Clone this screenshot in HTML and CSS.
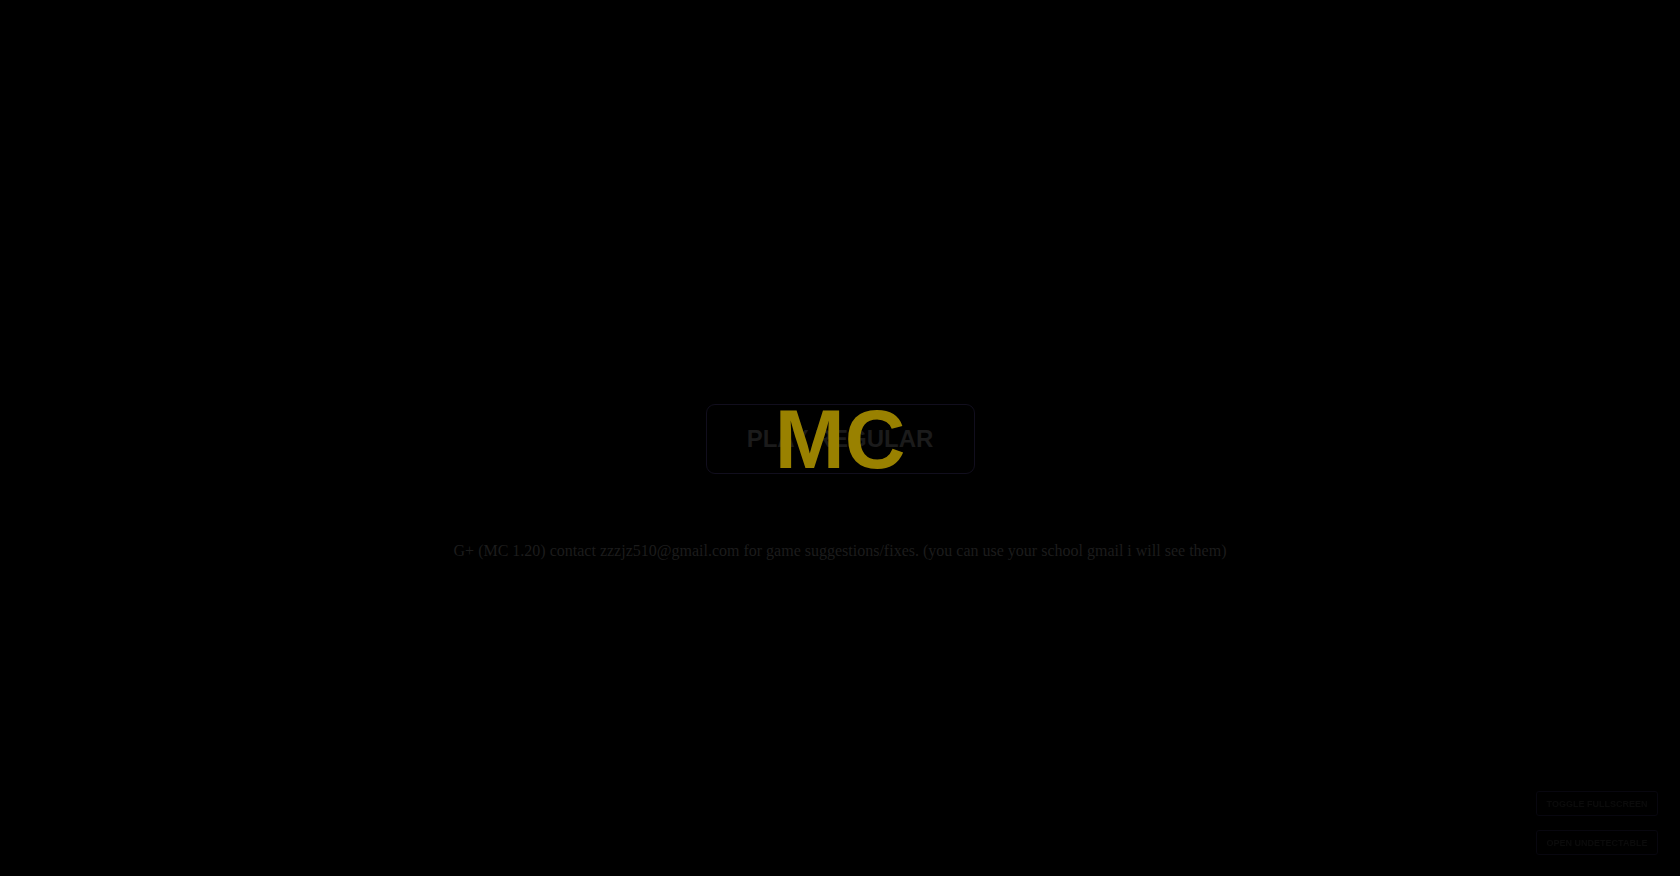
FILE: index.html
```html
<!DOCTYPE html>
<html lang="en">
<head>
<meta charset="utf-8">
<title>G+</title>
<link rel="stylesheet" href="styles.css">
</head>
<body>
<main class="stage">
  <div class="play-wrap">
    <button class="play-btn">PLAY REGULAR</button>
    <div class="logo">MC</div>
  </div>
  <p class="note">G+ (MC 1.20) contact zzzjz510@gmail.com for game suggestions/fixes. (you can use your school gmail i will see them)</p>
</main>
<div class="corner">
  <button class="small-btn">TOGGLE FULLSCREEN</button>
  <button class="small-btn">OPEN UNDETECTABLE</button>
</div>
</body>
</html>
```

FILE: styles.css
```css
html, body {
  margin: 0;
  padding: 0;
  background: #000;
  height: 100%;
  overflow: hidden;
}

.stage {
  display: flex;
  flex-direction: column;
  align-items: center;
  padding-top: 404px;
}

.play-wrap {
  position: relative;
  display: flex;
  align-items: center;
  justify-content: center;
}

.play-btn {
  width: 269px;
  height: 70px;
  box-sizing: border-box;
  background: #000;
  border: 1px solid #110e1d;
  border-radius: 9px;
  color: #1b1b1b;
  font-family: "Liberation Sans", Arial, sans-serif;
  font-weight: bold;
  font-size: 24px;
  padding: 0;
  cursor: pointer;
}

.logo {
  position: absolute;
  left: 50%;
  top: 50%;
  transform: translate(-50%, -50%);
  font-family: "Liberation Sans", Arial, sans-serif;
  font-weight: bold;
  font-size: 84px;
  line-height: 1;
  color: #998100;
  pointer-events: none;
  white-space: nowrap;
}

.note {
  margin: 68px 0 0;
  font-family: "Liberation Serif", "Times New Roman", serif;
  font-size: 16px;
  color: #1c1c1c;
  white-space: nowrap;
}

.corner {
  position: fixed;
  right: 22px;
  bottom: 21px;
  display: flex;
  flex-direction: column;
  gap: 14px;
}

.small-btn {
  width: 122px;
  height: 25px;
  box-sizing: border-box;
  background: #000;
  border: 1px solid #08070f;
  border-radius: 3px;
  color: #0b0b0b;
  font-family: "Liberation Sans", Arial, sans-serif;
  font-weight: bold;
  font-size: 9px;
  padding: 0;
}
```
